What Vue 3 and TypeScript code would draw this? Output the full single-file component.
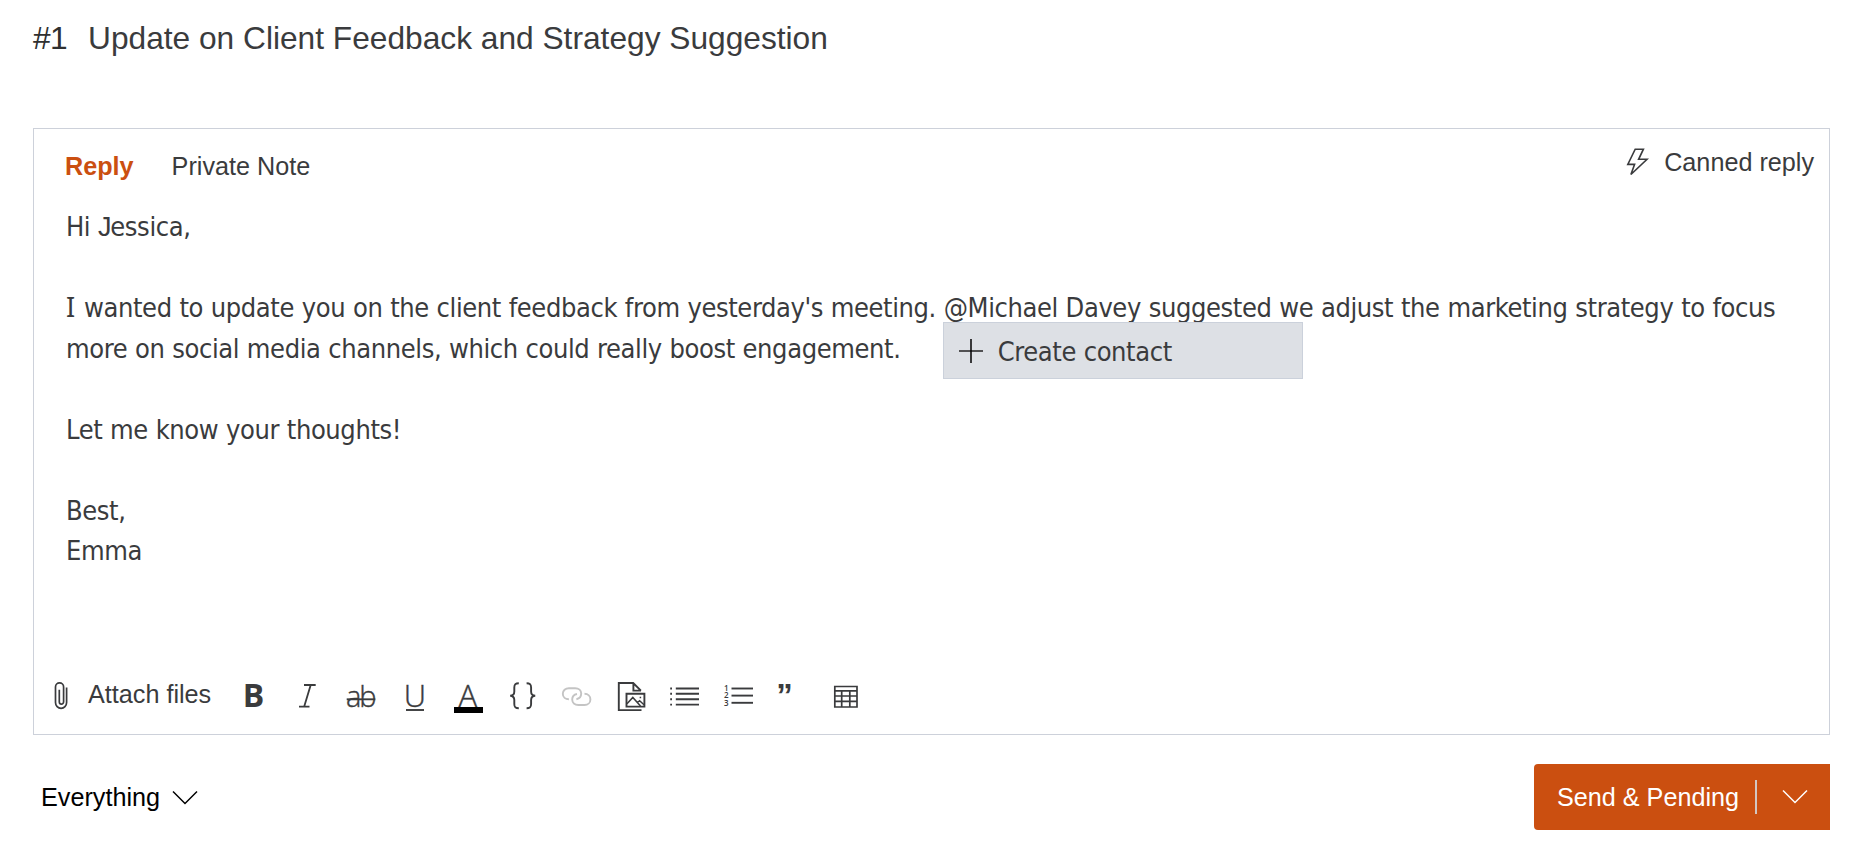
<script setup lang="ts">
import { ref } from 'vue'

type Tab = 'reply' | 'note'

const activeTab = ref<Tab>('reply')
const tabs: { id: Tab; label: string }[] = [
  { id: 'reply', label: 'Reply' },
  { id: 'note', label: 'Private Note' },
]
const listRows: number[] = [12.5, 17.8, 23.3, 28.6]
const numberRows: { n: number; y: number }[] = [
  { n: 1, y: 12.5 },
  { n: 2, y: 19.6 },
  { n: 3, y: 26.8 },
]
</script>

<template>
  <main class="ticket">
    <header class="title">
      <span class="number">#1</span>
      <span>Update on Client Feedback and Strategy Suggestion</span>
    </header>

    <section class="editor">
      <div class="editor-head">
        <nav class="tabs">
          <button
            v-for="tab in tabs"
            :key="tab.id"
            class="tab"
            :class="{ active: tab.id === activeTab }"
            @click="activeTab = tab.id"
          >{{ tab.label }}</button>
        </nav>
        <button class="canned">
          <svg width="24" height="30" viewBox="0 0 24 30" class="line">
            <path d="M9.2 2.2H17.4L12.6 12.3H21L4.9 27.5L8.6 17.4H1.8Z" stroke-width="1.6" />
          </svg>
          <span>Canned reply</span>
        </button>
      </div>

      <div class="message">
        <p>Hi <span class="cap-j">J</span>essica,</p>
        <p class="blank"></p>
        <p class="wide"><span class="cap">I</span> wanted to update you on the client feedback from yesterday's meeting. <span class="mention">@Michael<span class="menu"><svg width="26" height="26" viewBox="0 0 26 26"><path d="M1 13H25" stroke="#222" stroke-width="1.5" /><path d="M13 1V25" stroke="#000" stroke-width="1.5" /></svg><span class="menu-label">Create contact</span></span></span> Davey suggested we adjust the marketing strategy to focus</p>
        <p>more on social media channels, which could really boost engagement.</p>
        <p class="blank"></p>
        <p>Let me know your thoughts!</p>
        <p class="blank"></p>
        <p>Best,</p>
        <p>Emma</p>
      </div>

      <div class="toolbar">
        <button class="attach">
          <svg width="14" height="30" viewBox="0 0 14 30" class="line">
            <path d="M12.6 6.5V21.5A5.5 5.8 0 0 1 1.5 21.5V6A4 4 0 0 1 9.6 6V20.8A2.1 2.3 0 0 1 5.3 20.8V8.8" stroke-width="1.7" />
          </svg>
          <span class="attach-label">Attach files</span>
        </button>
        <button class="tool">
          <svg viewBox="0 0 54 40"><text class="bold" x="27.5" y="31">B</text></svg>
        </button>
        <button class="tool">
          <svg viewBox="0 0 54 40" class="line"><path d="M24 9H35.7M19 30.6H29.5M30.7 9L24.2 30.6" stroke-width="1.8" /></svg>
        </button>
        <button class="tool">
          <svg viewBox="0 0 54 40">
            <text class="light strike" x="26.2" y="31">ab</text>
            <path d="M12.7 23.3H41.3" class="stroke" />
          </svg>
        </button>
        <button class="tool">
          <svg viewBox="0 0 54 40">
            <text class="light" x="27" y="30.5">U</text>
            <path d="M18 34H36" class="stroke" />
          </svg>
        </button>
        <button class="tool">
          <svg viewBox="0 0 54 40">
            <text class="light" x="25.8" y="31">A</text>
            <rect x="12" y="31" width="29" height="6" fill="#000" />
          </svg>
        </button>
        <button class="tool">
          <svg viewBox="0 0 54 40" class="line">
            <path d="M22.8 7.3C19 7.3 18.3 8.7 18.3 11.5V15.5C18.3 18.2 17 19.6 14.2 19.8C17 20 18.3 21.4 18.3 24.1V28C18.3 30.9 19 32.3 22.8 32.3" />
            <path d="M30.6 7.3C34.4 7.3 35.1 8.7 35.1 11.5V15.5C35.1 18.2 36.4 19.6 39.2 19.8C36.4 20 35.1 21.4 35.1 24.1V28C35.1 30.9 34.4 32.3 30.6 32.3" />
          </svg>
        </button>
        <button class="tool">
          <svg viewBox="0 0 54 40" class="line muted">
            <path d="M18.9 23.3C15.5 23.3 12.8 21 12.8 17.8S15.5 12.2 18.9 12.2H25.2C28.8 12.2 31.2 14.6 31.2 17.6C31.2 20.4 29.2 22.7 26.4 23.2" />
            <path d="M34.5 17.8C38 17.8 40.4 20.3 40.4 23.4S38 29 34.5 29H28.3C24.7 29 22.2 26.6 22.2 23.6C22.2 20.7 24.2 18.5 27 18" />
          </svg>
        </button>
        <button class="tool">
          <svg viewBox="0 0 54 40" class="line">
            <path d="M37.5 34.1H14.8V7H29.2L36.9 14.7M29.4 7V14.6H37" />
            <path d="M22.5 17.7H40.4V30.6H22.5Z" />
            <path d="M23 27.7L28.8 21.4L36.5 30M33 27L35.6 24.8L40 28.7M36.4 20.8V22.2" stroke-width="1.5" />
          </svg>
        </button>
        <button class="tool">
          <svg viewBox="0 0 54 40" class="line">
            <path v-for="y in listRows" :key="y" :d="`M12.2 ${y}H14M17.8 ${y}H41`" />
          </svg>
        </button>
        <button class="tool">
          <svg viewBox="0 0 54 40">
            <g v-for="row in numberRows" :key="row.n">
              <text class="digit" x="14.2" :y="row.y + 2.8">{{ row.n }}</text>
              <path class="stroke" :d="`M19.5 ${row.y}H41`" />
            </g>
          </svg>
        </button>
        <button class="tool">
          <svg viewBox="0 0 54 40"><text class="quote" x="18.6" y="30.5">”</text></svg>
        </button>
        <button class="tool">
          <svg viewBox="0 0 54 40" class="line">
            <path d="M14.8 10.5H37V31H14.8ZM14.8 14.8H37M14.8 20H37M14.8 25.4H37M21.7 14.8V31M29.8 14.8V31" stroke-width="1.7" />
          </svg>
        </button>
      </div>
    </section>

    <footer class="actions">
      <button class="filter">
        <span>Everything</span>
        <svg width="26" height="16" viewBox="0 0 26 16"><path d="M1 1.5L13 13.5L25 1.5" stroke="#000" stroke-width="1.5" /></svg>
      </button>
      <div class="send">
        <button class="send-main">Send &amp; Pending</button>
        <span class="divider"></span>
        <button class="send-more">
          <svg width="26" height="16" viewBox="0 0 26 16"><path d="M1 1.5L13 13.5L25 1.5" stroke="#fff" stroke-width="1.5" /></svg>
        </button>
      </div>
    </footer>
  </main>
</template>

<style>
body {
  margin: 0;
  background: #fff;
}
</style>

<style scoped>
.ticket {
  box-sizing: border-box;
  width: 1860px;
  height: 855px;
  padding: 0 30px 0 33px;
  font-family: "Liberation Sans", Arial, sans-serif;
  font-size: 25.2px;
  color: #3a3b3d;
  overflow: hidden;
}
button {
  padding: 0;
  border: 0;
  background: none;
  font: inherit;
  color: inherit;
  white-space: nowrap;
}
svg {
  display: block;
  fill: none;
  flex: none;
  overflow: visible;
}
.title {
  display: flex;
  gap: 23px;
  height: 128px;
  line-height: 76px;
  font-size: 31.7px;
  white-space: nowrap;
}
.number {
  color: #303030;
  width: 32px;
  letter-spacing: -0.5px;
}
.editor {
  box-sizing: border-box;
  display: flex;
  flex-direction: column;
  height: 607px;
  border: 1px solid #cdd1da;
}
.editor-head {
  display: flex;
  justify-content: space-between;
  height: 78px;
  padding: 0 15px 0 31px;
}
.tabs {
  display: flex;
  gap: 38px;
  height: 75px;
}
.tab.active {
  font-weight: 700;
  color: #cb4f10;
}
.canned {
  display: flex;
  align-items: center;
  gap: 14px;
  height: 66px;
}
.message {
  flex: 1;
  padding-left: 32px;
  font-family: "DejaVu Sans Condensed", "DejaVu Sans", sans-serif;
  font-stretch: condensed;
  font-size: 27px;
  line-height: 40.5px;
  letter-spacing: -0.4px;
  word-spacing: 0.45px;
  white-space: nowrap;
}
.message p {
  margin: 0;
  height: 40.5px;
}
.cap {
  margin-right: 1.5px;
  font-family: "Noto Sans", sans-serif;
  line-height: 1;
}
.cap-j {
  margin-right: -0.8px;
  font-family: "Liberation Sans", sans-serif;
  line-height: 1;
}
.mention {
  position: relative;
}
.menu {
  position: absolute;
  left: -1px;
  top: 30px;
  box-sizing: border-box;
  display: flex;
  align-items: center;
  gap: 14px;
  width: 360px;
  height: 57px;
  padding-left: 14px;
  border: 1px solid #cbd1db;
  background: #dde0e5;
}
.menu-label {
  padding-top: 4px;
}
.toolbar {
  display: flex;
  align-items: center;
  height: 40px;
  margin-bottom: 18px;
  padding-left: 20px;
}
.attach {
  display: flex;
  align-items: center;
  gap: 20px;
  width: 172px;
}
.attach-label {
  padding-bottom: 3px;
}
.tool svg {
  width: 54px;
  height: 40px;
}
.line,
.stroke {
  stroke: #3a3b3d;
  stroke-width: 1.9;
}
.line.muted {
  stroke: #c4c4c4;
}
.tool text {
  fill: #3a3b3d;
  text-anchor: middle;
  font-family: "Open Sans", sans-serif;
}
.tool .bold {
  font-size: 32px;
  font-weight: 700;
}
.tool .light {
  font-size: 31px;
  font-weight: 300;
  stroke: #3a3b3d;
  stroke-width: 0.4px;
}
.tool .strike {
  font-size: 29px;
  letter-spacing: -2px;
}
.tool .digit {
  font-size: 8px;
  font-weight: 600;
}
.tool .quote {
  font-family: "Liberation Sans", sans-serif;
  font-size: 33px;
  font-weight: 700;
}
.actions {
  display: flex;
  justify-content: space-between;
  padding: 29px 0 0 8px;
}
.filter {
  display: flex;
  align-items: center;
  gap: 12px;
  height: 67px;
  color: #000;
}
.send {
  display: flex;
  align-items: center;
  width: 296px;
  height: 66px;
  border-radius: 4px 0 0 4px;
  background: #cb4f10;
  color: #fff;
}
.send-main {
  width: 221px;
  padding-left: 23px;
  text-align: left;
}
.divider {
  width: 2px;
  height: 34px;
  background: #d3c7c2;
}
.send-more {
  flex: 1;
  display: flex;
  padding-left: 25px;
}
</style>
